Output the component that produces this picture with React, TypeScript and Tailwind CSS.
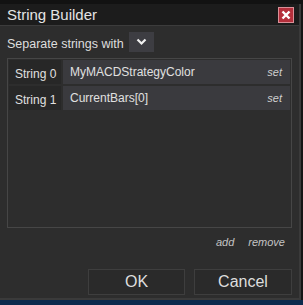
const rows = [
  { label: 'String 0', value: 'MyMACDStrategyColor' },
  { label: 'String 1', value: 'CurrentBars[0]' },
];

const ChevronDown = () => (
  <svg width="11" height="8" viewBox="0 0 11 8" fill="none">
    <path d="M1.5 1.5 L5.5 5.5 L9.5 1.5" stroke="#f0f0f0" strokeWidth="2.2" />
  </svg>
);

export default function App() {
  return (
    <div
      className="w-[303px] h-[305px] bg-[#151515] flex flex-col overflow-hidden"
      style={{ fontFamily: '"Liberation Sans", Arial, sans-serif' }}
    >
      {/* app behind the dialog */}
      <div className="h-[4px] bg-[#121212]" />

      <div className="flex-1 flex flex-col bg-[#2d2d2d] border-r-[2px] border-b-[2px] border-[#3a3a3a] mr-[2px]">
        {/* title bar */}
        <div className="h-[22px] bg-[#1c1c1c] border-b border-[#3c3c3c] flex items-center justify-between pl-[7px] pr-[5px]">
          <span className="text-[15px] text-[#e4e4e4] leading-none">String Builder</span>
          <div className="w-[16px] h-[16px] bg-[#b42f3b] border border-[#d99098] flex items-center justify-center">
            <svg width="10" height="10" viewBox="0 0 10 10">
              <path d="M1.5 1.5 L8.5 8.5 M8.5 1.5 L1.5 8.5" stroke="#ffffff" strokeWidth="2.4" />
            </svg>
          </div>
        </div>

        <div className="flex-1 flex flex-col px-[7px] pt-[6px]">
          <div className="flex items-center gap-[5px] h-[20px]">
            <span className="text-[12.5px] text-[#dedede] pt-[4px]">Separate strings with</span>
            <div className="w-[25px] h-[20px] bg-[#3d3d42] flex items-center justify-center">
              <ChevronDown />
            </div>
          </div>

          {/* strings table */}
          <div className="mt-[6px] h-[170px] border border-[#464646] p-[1px] flex flex-col gap-[2px]">
            {rows.map((r) => (
              <div key={r.label} className="flex h-[24px] gap-[2px]">
                <div className="w-[52px] bg-[#272727] flex items-center pl-[6px] text-[12px] text-[#e0e0e0] pt-[3px]">
                  {r.label}
                </div>
                <div className="flex-1 bg-[#3a3a3e] flex items-center justify-between pl-[7px] pr-[8px]">
                  <span className="text-[12px] text-[#e0e0e0]">{r.value}</span>
                  <span className="text-[11px] italic text-[#cfcfcf]">set</span>
                </div>
              </div>
            ))}
          </div>

          <div className="flex justify-end gap-[14px] pr-[7px] mt-[6px] text-[11px] italic text-[#c4c4c4]">
            <span>add</span>
            <span>remove</span>
          </div>

          <div className="flex justify-end gap-[9px] mt-[18px]">
            <button className="w-[97px] h-[26px] bg-[#2a2a2a] border border-[#3e3e3e] text-[16px] text-[#dedede]">
              OK
            </button>
            <button className="w-[98px] h-[26px] bg-[#2a2a2a] border border-[#3e3e3e] text-[16px] text-[#dedede]">
              Cancel
            </button>
          </div>
        </div>
      </div>

      <div className="h-[5px] bg-[#0c2a4d]" />
    </div>
  );
}
